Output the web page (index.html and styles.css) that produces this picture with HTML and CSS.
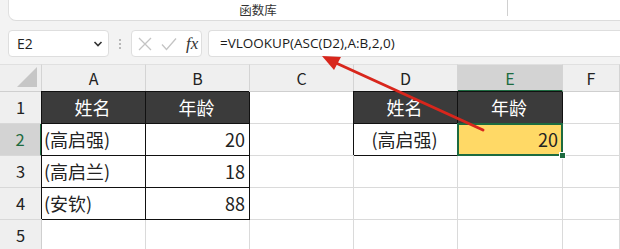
FILE: index.html
```html
<!DOCTYPE html>
<html lang="zh">
<head>
  <meta charset="UTF-8" />
  <title>VLOOKUP ASC</title>
  <link rel="stylesheet" href="styles.css">
</head>
<body>
  <div class="ribbon">
    <div class="ribbon-panel">
      <span class="group-label">函数库</span>
      <span class="group-sep"></span>
    </div>
  </div>

  <div class="fbar">
    <div class="namebox">
      <span>E2</span>
      <svg width="10" height="8" viewBox="0 0 10 8"><path d="M1.5 2 L5 5.5 L8.5 2" fill="none" stroke="#333" stroke-width="1.6"/></svg>
    </div>
    <div class="grip"><i></i><i></i><i></i></div>
    <div class="fbtns">
      <svg width="14" height="14" viewBox="0 0 14 14"><path d="M1 1 L13 13 M13 1 L1 13" stroke="#c4c4c4" stroke-width="1.3"/></svg>
      <svg width="16" height="14" viewBox="0 0 16 14"><path d="M1 7.5 L5.5 12.5 L15 1.5" fill="none" stroke="#c4c4c4" stroke-width="1.3"/></svg>
      <span class="fx">fx</span>
    </div>
    <div class="formula">=VLOOKUP(ASC(D2),A:B,2,0)</div>
  </div>

  <div class="sheet">
    <div class="corner"><span></span></div>
    <div class="colh">A</div>
    <div class="colh">B</div>
    <div class="colh">C</div>
    <div class="colh">D</div>
    <div class="colh sel">E</div>
    <div class="colh">F</div>

    <div class="rowh">1</div>
    <div class="cell head tb">姓名</div>
    <div class="cell head tb">年龄</div>
    <div class="cell"></div>
    <div class="cell head tb">姓名</div>
    <div class="cell head tb">年龄</div>
    <div class="cell"></div>

    <div class="rowh sel">2</div>
    <div class="cell tb">(高启强)</div>
    <div class="cell tb num">20</div>
    <div class="cell"></div>
    <div class="cell tb center">(高启强)</div>
    <div class="cell active num">20<span class="handle"></span></div>
    <div class="cell"></div>

    <div class="rowh">3</div>
    <div class="cell tb">(高启兰)</div>
    <div class="cell tb num">18</div>
    <div class="cell"></div>
    <div class="cell"></div>
    <div class="cell"></div>
    <div class="cell"></div>

    <div class="rowh">4</div>
    <div class="cell tb">(安钦)</div>
    <div class="cell tb num">88</div>
    <div class="cell"></div>
    <div class="cell"></div>
    <div class="cell"></div>
    <div class="cell"></div>

    <div class="rowh">5</div>
    <div class="cell"></div>
    <div class="cell"></div>
    <div class="cell"></div>
    <div class="cell"></div>
    <div class="cell"></div>
    <div class="cell"></div>
  </div>

  <svg class="arrow" width="620" height="249" viewBox="0 0 620 249">
    <line x1="483" y1="130" x2="336" y2="63" stroke="#d8261c" stroke-width="3" stroke-linecap="round"/>
    <path d="M322 56 L341 57 L334 70 Z" fill="#d8261c"/>
  </svg>
</body>
</html>
```

FILE: styles.css
```css
* {
  box-sizing: border-box;
}
body {
  margin: 0;
  width: 620px;
  height: 249px;
  overflow: hidden;
  background: #f3f3f3;
  font-family: "Noto Sans CJK SC", "Noto Sans", sans-serif;
  color: #222;
  position: relative;
}
.ribbon {
  height: 21px;
}
.ribbon-panel {
  margin-left: 8px;
  height: 21px;
  background: #fff;
  border-left: 1px solid #e0e0e0;
  border-bottom: 1px solid #dcdcdc;
  border-bottom-left-radius: 8px;
  display: flex;
  align-items: flex-start;
}
.group-label {
  width: 498px;
  text-align: center;
  font-size: 12.5px;
  line-height: 19px;
  color: #333;
}
.group-sep {
  width: 1px;
  height: 16px;
  background: #d0d0d0;
}
.fbar {
  display: flex;
  align-items: center;
  padding: 9px 0 0 8px;
  height: 36px;
}
.namebox {
  width: 101px;
  height: 27px;
  background: #fff;
  border: 1px solid #dedede;
  border-radius: 4px;
  display: flex;
  align-items: center;
  justify-content: space-between;
  padding: 0 5px 0 8px;
  font-family: "Open Sans", sans-serif;
  font-size: 14px;
}
.grip {
  width: 22px;
  display: flex;
  flex-direction: column;
  align-items: center;
  gap: 2px;
}
.grip i {
  width: 2px;
  height: 2px;
  background: #b8b8b8;
}
.fbtns {
  width: 71px;
  height: 27px;
  background: #fff;
  border: 1px solid #dedede;
  border-radius: 4px;
  display: flex;
  align-items: center;
  gap: 9px;
  padding-left: 6px;
}
.fx {
  font-family: "Liberation Serif", serif;
  font-style: italic;
  font-size: 17px;
  color: #333;
}
.formula {
  flex: 1;
  margin-left: 6px;
  height: 27px;
  background: #fff;
  border: 1px solid #dedede;
  border-right: none;
  border-radius: 4px 0 0 4px;
  padding-left: 11px;
  font-family: "Open Sans", sans-serif;
  font-size: 13.5px;
  line-height: 25px;
  color: #1a1a1a;
}
.sheet {
  margin-top: 7px;
  display: grid;
  grid-template-columns: 42px 104px 104px 104px 104px 105px 1fr;
  grid-template-rows: 28px repeat(5, 32px);
  background: #fff;
}
.corner {
  background: #efefef;
  border-right: 1px solid #d4d4d4;
  border-bottom: 1px solid #cfcfcf;
  border-top: 1px solid #e0e0e0;
  position: relative;
}
.corner span {
  position: absolute;
  right: 4px;
  bottom: 4px;
  width: 20px;
  height: 20px;
  background: #c6c6c6;
  clip-path: polygon(100% 0, 100% 100%, 0 100%);
}
.colh {
  background: #efefef;
  border-right: 1px solid #d4d4d4;
  border-bottom: 1px solid #cfcfcf;
  border-top: 1px solid #e0e0e0;
  text-align: center;
  font-size: 16px;
  line-height: 27px;
  color: #222;
}
.colh.sel {
  background: #d3d3d3;
  color: #1d6b40;
  border-bottom: 2px solid #1d6b40;
}
.rowh {
  background: #efefef;
  border-right: 1px solid #cfcfcf;
  border-bottom: 1px solid #d8d8d8;
  text-align: center;
  font-size: 16.5px;
  line-height: 31px;
  color: #222;
}
.rowh.sel {
  background: #d3d3d3;
  color: #1d6b40;
  border-right: 2px solid #1d6b40;
}
.cell {
  border-right: 1px solid #dadada;
  border-bottom: 1px solid #dadada;
  font-size: 18px;
  line-height: 31px;
  padding: 0 4px 0 2px;
  white-space: nowrap;
  position: relative;
}
.cell.tb {
  border-color: #111;
  box-shadow: -1px -1px 0 #111;
}
.cell.head {
  background: #3b3b3b;
  color: #fff;
  text-align: center;
  line-height: 31px;
}
.cell.num {
  text-align: right;
}
.cell.center {
  text-align: center;
}
.cell.active {
  background: #ffd966;
  border: 2px solid #1d6b40;
  margin: -1px 0 0 -1px;
  line-height: 29px;
  padding-right: 3px;
  z-index: 1;
}
.handle {
  position: absolute;
  right: -5px;
  bottom: -5px;
  width: 7px;
  height: 7px;
  background: #1d6b40;
  border: 1px solid #fff;
}
.arrow {
  position: absolute;
  left: 0;
  top: 0;
  z-index: 2;
  pointer-events: none;
}
```
